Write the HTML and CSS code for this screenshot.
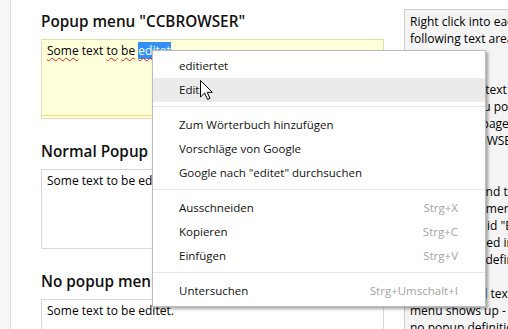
FILE: index.html
```html
<!DOCTYPE html>
<html lang="en">
<head>
    <meta charset="UTF-8">
    <meta name="viewport" content="width=device-width, initial-scale=1.0">
    <title>Popup menu test</title>
    <link rel="stylesheet" href="styles.css">
</head>

<body>

    <div class="page">
        <div class="sidebar"></div>

        <div class="main">
            <h2>Popup menu "CCBROWSER"</h2>
            <div class="textarea textarea-popup"><span class="typo">Some</span> text <span class="typo">to</span> <span class="typo">be</span> <span class="typo selected">editet</span></div>

            <h2>Normal Popup menu</h2>
            <div class="textarea">Some text to be editet.</div>

            <h2>No popup menu</h2>
            <div class="textarea">Some text to be editet.</div>
        </div>

        <div class="notes">
            <p>Right click into each of the<br>following text areas.</p>
            <p>Example 1:<br>Click into the text<br>area, then you popup the<br>menu of the page<br>via id "CCBROWSER".</p>
            <p>Example 2:<br>Now the second text area<br>gets a popup menu<br>from its page id "EDIT",<br>which is defined in the<br>popup menu definition.</p>
            <p>With the third text area no<br>menu shows up - there is<br>no popup definition for it.</p>
        </div>
    </div>

    <!-- browser context menu, opened over the first text area -->
    <div class="context-menu">
        <div class="menu-item">editiertet</div>
        <div class="menu-item active">Edit</div>
        <div class="menu-separator"></div>
        <div class="menu-item">Zum Wörterbuch hinzufügen</div>
        <div class="menu-item">Vorschläge von Google</div>
        <div class="menu-item">Google nach "editet" durchsuchen</div>
        <div class="menu-separator"></div>
        <div class="menu-item">Ausschneiden <span class="shortcut">Strg+X</span></div>
        <div class="menu-item">Kopieren <span class="shortcut">Strg+C</span></div>
        <div class="menu-item">Einfügen <span class="shortcut">Strg+V</span></div>
        <div class="menu-separator"></div>
        <div class="menu-item">Untersuchen <span class="shortcut">Strg+Umschalt+I</span></div>
    </div>

    <svg class="cursor" width="14" height="21" viewBox="0 0 14 21">
        <path d="M0.5 0.5 L0.5 17 L4.6 13 L7.6 19.5 L10 18.4 L7.2 12.3 L12.3 12.3 Z" fill="#fff" stroke="#000" stroke-width="1" stroke-linejoin="miter"/>
    </svg>

</body>
</html>
```

FILE: styles.css
```css
* {
    margin: 0;
    padding: 0;
    box-sizing: border-box;
}

html,
body {
    height: 100%;
    overflow: hidden;
}

body {
    font-family: "Open Sans", "Noto Sans", sans-serif;
    color: #000;
    background: #fff;
}

.page {
    display: flex;
    align-items: flex-start;
    min-height: 100vh;
}

.sidebar {
    align-self: stretch;
    flex-shrink: 0;
    width: 11px;
    background: #f6f6f6;
    border-right: 1px solid #dedede;
}

.main {
    flex-shrink: 0;
    width: 393px;
    padding: 10px 0 0 30px;
}

.main h2 {
    font-size: 15.3px;
    font-weight: 600;
    line-height: 22px;
    margin-bottom: 7px;
    color: #111;
    white-space: nowrap;
}

.textarea {
    width: 343px;
    height: 80px;
    margin-bottom: 21px;
    padding: 2px 5px;
    border: 1px solid #d9d9d9;
    font-size: 12px;
    line-height: 17px;
}

.textarea-popup {
    background: #ffffd9;
    border-color: #e2dcb3;
    box-shadow: inset 0 -2px 0 #ffffd9, inset 0 -3px 0 #f8d78a;
}

.typo {
    text-decoration: underline wavy #e02020;
    text-decoration-thickness: 1px;
    text-underline-offset: 2px;
}

.selected {
    background: #3390f5;
    color: #fff;
}

.notes {
    flex-shrink: 0;
    width: 240px;
    margin-top: 9px;
    padding: 3px 5px;
    background: #f4f4f4;
    border: 1px solid #cdcdcd;
    font-size: 12px;
    line-height: 17px;
}

.notes p {
    margin-bottom: 17px;
    white-space: nowrap;
}

.context-menu {
    position: absolute;
    left: 152px;
    top: 50px;
    width: 334px;
    padding: 3px 0;
    background: #fff;
    border: 1px solid #bcbcbc;
    box-shadow: 2px 2px 3px rgba(0, 0, 0, 0.35);
    font-size: 11.5px;
    color: #111;
}

.menu-item {
    display: flex;
    justify-content: space-between;
    align-items: center;
    height: 24px;
    padding: 0 27px 1px 26px;
}

.menu-item.active {
    background: #ebebeb;
}

.shortcut {
    color: #a3a3a3;
}

.menu-separator {
    height: 1px;
    margin: 4px 0 6px;
    background: #e6e6e6;
}

.cursor {
    position: absolute;
    left: 200px;
    top: 80px;
}
```
